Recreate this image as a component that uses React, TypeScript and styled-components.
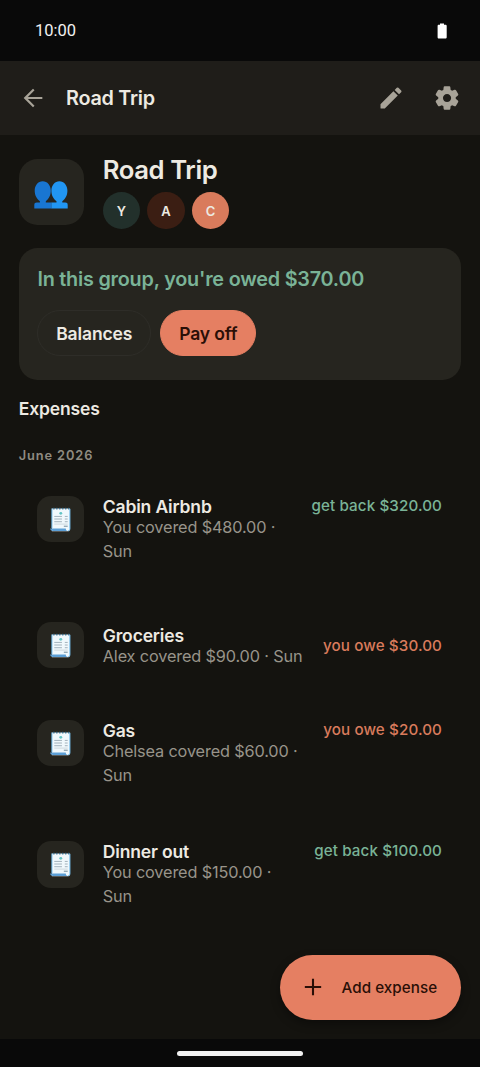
import React from 'react';
import styled, { createGlobalStyle } from 'styled-components';

const GlobalStyle = createGlobalStyle`
  * { box-sizing: border-box; }
  body { margin: 0; background: #14130f; }
  h1, h2, h3, p { margin: 0; }
  button { border: 0; padding: 0; background: none; font: inherit; color: inherit; }
`;

const Screen = styled.div`
  position: relative;
  display: flex;
  flex-direction: column;
  width: 480px;
  height: 1067px;
  overflow: hidden;
  background: #14130f;
  color: #edeae2;
  font-family: Inter, 'Liberation Sans', sans-serif;
`;

const StatusBar = styled.header`
  display: flex;
  flex: none;
  align-items: center;
  justify-content: space-between;
  height: 61px;
  padding: 0 30px 0 35px;
  background: #090909;
  color: #f1f1f1;
  font: 400 16.5px/20px Roboto, sans-serif;
`;

const AppBar = styled.nav`
  display: flex;
  flex: none;
  align-items: center;
  height: 74px;
  padding: 0 19px;
  background: #1f1d19;
  color: #a8a398;
`;

const IconButton = styled.button`
  display: flex;
  width: 28px;
  height: 28px;
`;

const BarTitle = styled.h2`
  flex: 1;
  margin-left: 19px;
  color: #edeae2;
  font-size: 19.8px;
  font-weight: 600;
  line-height: 26px;
  letter-spacing: -0.25px;
`;

const BarActions = styled.div`
  display: flex;
  gap: 28px;
`;

const Content = styled.main`
  flex: 1;
  padding: 18px 19px 0 18.7px;
`;

const GroupHeader = styled.section`
  display: flex;
  gap: 18.7px;
  height: 95px;
`;

const IconTile = styled.div<{ $size: number; $radius: number }>`
  display: flex;
  flex: none;
  align-items: center;
  justify-content: center;
  width: ${p => p.$size}px;
  height: ${p => p.$size}px;
  border-radius: ${p => p.$radius}px;
  background: #26251f;
`;

const GroupTile = styled(IconTile)`
  margin-top: 6.3px;
  padding-top: 7px;
`;

const GroupName = styled.h1`
  font-size: 25.7px;
  font-weight: 600;
  line-height: 34px;
  letter-spacing: -0.4px;
`;

const Avatars = styled.div`
  display: flex;
  gap: 7px;
  margin-top: 4.8px;
`;

const Avatar = styled.span<{ $bg: string }>`
  display: flex;
  align-items: center;
  justify-content: center;
  width: 37.5px;
  height: 37.5px;
  border-radius: 50%;
  background: ${p => p.$bg};
  font-size: 13px;
  font-weight: 600;
`;

const SummaryCard = styled.section`
  height: 131.5px;
  padding: 17.5px 18.7px;
  border-radius: 18.7px;
  background: #26251f;
`;

const SummaryText = styled.p`
  color: #7ab397;
  font-size: 19.8px;
  font-weight: 600;
  line-height: 26px;
  letter-spacing: -0.21px;
`;

const Actions = styled.div`
  display: flex;
  gap: 9.3px;
  margin-top: 18px;
`;

const PillButton = styled.button<{ $primary?: boolean }>`
  height: 46.7px;
  padding: 1.5px 17.8px 0;
  border: 1px solid ${p => (p.$primary ? '#e57f62' : '#2e2d28')};
  border-radius: 24px;
  background: ${p => (p.$primary ? '#e57f62' : 'transparent')};
  color: ${p => (p.$primary ? '#2a0f07' : '#edeae2')};
  font-size: 17.5px;
  font-weight: 600;
  letter-spacing: -0.12px;
`;

const SectionTitle = styled.h2`
  margin-top: 17px;
  font-size: 17.5px;
  font-weight: 600;
  line-height: 24px;
  letter-spacing: -0.14px;
`;

const MonthLabel = styled.h3`
  margin-top: 26.3px;
  color: #8f8b81;
  font-size: 12.8px;
  font-weight: 600;
  line-height: 18px;
  letter-spacing: 0.9px;
`;

const ExpenseList = styled.div`
  display: flex;
  flex-direction: column;
  gap: 18.67px;
  margin-top: 16.9px;
`;

const ExpenseRow = styled.article<{ $tall: boolean }>`
  display: flex;
  align-items: ${p => (p.$tall ? 'flex-start' : 'center')};
  gap: 16px;
  height: ${p => (p.$tall ? 102.67 : 84)}px;
  padding: ${p => (p.$tall ? '14px' : '0')} 19px 0 18.7px;
`;

const ExpenseText = styled.div<{ $tall: boolean }>`
  flex: 1;
  margin-left: 2.7px;
  padding-top: ${p => (p.$tall ? 0 : 3)}px;
  white-space: pre;
`;

const ExpenseTitle = styled.h3`
  font-size: 17.5px;
  font-weight: 600;
  line-height: 21px;
  letter-spacing: -0.15px;
`;

const ExpenseDetail = styled.p`
  color: #98948a;
  font-size: 16.3px;
  line-height: 24.2px;
  margin-top: -2px;
  letter-spacing: -0.15px;
`;

const Amount = styled.span<{ $owed: boolean }>`
  color: ${p => (p.$owed ? '#7ab397' : '#d97b5c')};
  font-size: 15.2px;
  font-weight: 500;
  line-height: 19px;
  letter-spacing: 0.1px;
  white-space: nowrap;
`;

const AddButton = styled.button`
  position: absolute;
  right: 19px;
  bottom: 47px;
  display: flex;
  align-items: center;
  gap: 15px;
  width: 181px;
  height: 65.5px;
  padding-left: 18.5px;
  border-radius: 33px;
  background: #e57f62;
  box-shadow: 0 4px 10px rgba(0, 0, 0, 0.35);
  color: #2a0f07;
  font-size: 15.2px;
  font-weight: 500;
  letter-spacing: 0.05px;
`;

const SystemBar = styled.footer`
  display: flex;
  flex: none;
  justify-content: center;
  height: 28.5px;
  padding-top: 12px;
  background: #090909;
`;

const HomeHandle = styled.div`
  width: 126px;
  height: 5px;
  border-radius: 3px;
  background: #f1f1f1;
`;

const Glyph = ({ d, size = 28 }: { d: string; size?: number }) => (
  <svg width={size} height={size} viewBox="0 0 24 24" fill="currentColor">
    <path d={d} />
  </svg>
);

const BACK = 'M20 11.100v1.800H7.600l5.700 5.700L12 20l-8-8 8-8 1.300 1.400-5.700 5.700z';
const EDIT =
  'M3 17.46v3.04c0 .28.22.5.5.5h3.04c.13 0 .26-.05.35-.15L17.81 9.94l-3.75-3.75L3.15 17.1c-.1.1-.15.22-.15.36zM20.71 7.04c.39-.39.39-1.02 0-1.41l-2.34-2.34a.996.996 0 0 0-1.41 0l-1.83 1.83 3.75 3.75 1.83-1.83z';
const SETTINGS =
  'M19.5 12c0-.23-.01-.45-.03-.68l1.86-1.41c.4-.3.51-.86.26-1.3l-1.87-3.23a.987.987 0 0 0-1.25-.42l-2.15.91c-.37-.26-.76-.49-1.17-.68l-.29-2.31c-.06-.5-.49-.88-.99-.88h-3.73c-.51 0-.94.38-1 .88l-.29 2.31c-.41.19-.8.42-1.17.68l-2.15-.91c-.46-.2-1-.02-1.25.42L2.41 8.62c-.25.44-.14.99.26 1.3l1.86 1.41a7.343 7.343 0 0 0 0 1.35l-1.86 1.41c-.4.3-.51.86-.26 1.3l1.87 3.23c.25.44.79.62 1.25.42l2.15-.91c.37.26.76.49 1.17.68l.29 2.31c.06.5.49.88.99.88h3.73c.5 0 .93-.38.99-.88l.29-2.31c.41-.19.8-.42 1.17-.68l2.15.91c.46.2 1 .02 1.25-.42l1.87-3.23c.25-.44.14-.99-.26-1.3l-1.86-1.41c.03-.23.04-.45.04-.68zm-7.46 3.5c-1.93 0-3.5-1.57-3.5-3.5s1.57-3.5 3.5-3.5 3.5 1.57 3.5 3.5-1.57 3.5-3.5 3.5z';
const PLUS = 'M19 12.900h-6.100V19h-1.800v-6.100H5v-1.800h6.100V5h1.800v6.100H19z';

const BatteryIcon = () => (
  <svg width="16" height="20" viewBox="0 0 16 20" fill="#fff">
    <path d="M6 2.500h4v1.200h1.400c.8 0 1.300.5 1.300 1.300v11.300c0 .8-.5 1.300-1.300 1.300H4.900c-.8 0-1.300-.5-1.300-1.300V5c0-.8.5-1.300 1.300-1.300H6z" />
  </svg>
);

const PeopleIcon = () => (
  <svg width="34" height="28" viewBox="0 0 34 28">
    <path fill="#1976d2" d="M8.700.300c4.700 0 8.100 4.200 8.100 9.500 0 4.300-2 8.400-5 10.400v1.400h5.700v5.900H.300v-3.600c0-1.500 1-2.300 2.500-2.300h3.100v-1.400C2.800 18.200.700 14.100.700 9.800.700 4.500 4 .300 8.700.300z" />
    <path fill="#2196f3" d="M25.400.300c4.600 0 8 4.200 8 9.500 0 4.300-2 8.400-5.100 10.400v1.400h3c1.500 0 2.400.8 2.400 2.300v3.600H17.400v-5.900h5.100v-1.400c-3.100-2-5.100-6.100-5.100-10.400 0-5.300 3.400-9.500 8-9.500z" />
  </svg>
);

const ReceiptIcon = () => (
  <svg width="23" height="25" viewBox="0 0 24 26">
    <path fill="#f0f8fc" d="M3 1.500h19V23c0 1.500-1 2.300-2.300 2.300H3z" />
    <path fill="#5c9fd6" d="M1.200 22.500h16.300c0 1.600.8 2.500 2.200 2.500H4.500c-2.100 0-3.300-.9-3.300-2.500z" />
    <path fill="none" stroke="#64b5e8" d="M3 22V1.500M21.800 2v20.500c0 1.500-.8 2.300-2 2.300" />
    <path fill="none" stroke="#29698f" strokeWidth="1.700" strokeDasharray="1.200 1.900" d="M4.500 1.700h17" />
    <circle cx="12.300" cy="6.600" r="1.500" fill="#62c4c5" />
    <path stroke="#8b9daa" strokeWidth=".8" d="M5.500 9.800h8M16.500 9.800h3M5.500 12.500h8M16.500 12.500h3M5.500 15.300h8M16.500 15.300h3" />
    <path stroke="#c4cfd5" strokeWidth=".8" d="M5.500 17.800h14" />
    <path stroke="#6f8796" d="M15.500 20h4" />
  </svg>
);

const expenses = [
  { title: 'Cabin Airbnb', detail: 'You covered $480.00 ·\nSun', amount: 'get back $320.00', owed: true },
  { title: 'Groceries', detail: 'Alex covered $90.00 · Sun', amount: 'you owe $30.00', owed: false },
  { title: 'Gas', detail: 'Chelsea covered $60.00 ·\nSun', amount: 'you owe $20.00', owed: false },
  { title: 'Dinner out', detail: 'You covered $150.00 ·\nSun', amount: 'get back $100.00', owed: true },
];

export default function App() {
  return (
    <Screen>
      <GlobalStyle />
      <StatusBar>
        <span>10:00</span>
        <BatteryIcon />
      </StatusBar>
      <AppBar>
        <IconButton aria-label="Back"><Glyph d={BACK} /></IconButton>
        <BarTitle>Road Trip</BarTitle>
        <BarActions>
          <IconButton aria-label="Edit"><Glyph d={EDIT} /></IconButton>
          <IconButton aria-label="Settings"><Glyph d={SETTINGS} /></IconButton>
        </BarActions>
      </AppBar>
      <Content>
        <GroupHeader>
          <GroupTile $size={65.3} $radius={18.7}><PeopleIcon /></GroupTile>
          <div>
            <GroupName>Road Trip</GroupName>
            <Avatars>
              <Avatar $bg="#22302b">Y</Avatar>
              <Avatar $bg="#3b1e13">A</Avatar>
              <Avatar $bg="#d97b5c">C</Avatar>
            </Avatars>
          </div>
        </GroupHeader>
        <SummaryCard>
          <SummaryText>In this group, you're owed $370.00</SummaryText>
          <Actions>
            <PillButton>Balances</PillButton>
            <PillButton $primary>Pay off</PillButton>
          </Actions>
        </SummaryCard>
        <SectionTitle>Expenses</SectionTitle>
        <MonthLabel>June 2026</MonthLabel>
        <ExpenseList>
          {expenses.map(e => {
            const tall = e.detail.includes('\n');
            return (
              <ExpenseRow key={e.title} $tall={tall}>
                <IconTile $size={46.7} $radius={14}><ReceiptIcon /></IconTile>
                <ExpenseText $tall={tall}>
                  <ExpenseTitle>{e.title}</ExpenseTitle>
                  <ExpenseDetail>{e.detail}</ExpenseDetail>
                </ExpenseText>
                <Amount $owed={e.owed}>{e.amount}</Amount>
              </ExpenseRow>
            );
          })}
        </ExpenseList>
      </Content>
      <SystemBar><HomeHandle /></SystemBar>
      <AddButton><Glyph d={PLUS} />Add expense</AddButton>
    </Screen>
  );
}
